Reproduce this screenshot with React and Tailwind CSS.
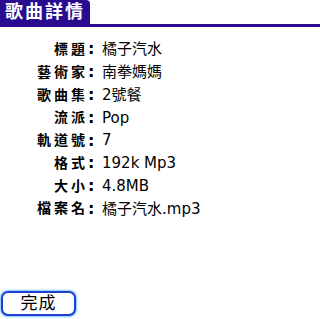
import React from 'react'

const rows = [
    ['標題', '橘子汽水'],
    ['藝術家', '南拳媽媽'],
    ['歌曲集', '2號餐'],
    ['流派', 'Pop'],
    ['軌道號', '7'],
    ['格式', '192k Mp3'],
    ['大小', '4.8MB'],
    ['檔案名', '橘子汽水.mp3'],
]

const font = { fontFamily: '"DejaVu Sans", "Noto Sans CJK TC", sans-serif' }

export default function App() {
    return (
        <div className="flex h-[319px] w-[320px] flex-col bg-white text-black" style={font}>
            <div className="flex flex-col">
                <div className="flex h-[24px] w-[90px] items-center rounded-tr-[4px] bg-[#2a0c91] pl-[5px] text-[18px] font-bold leading-none tracking-[2px] text-white">
                    歌曲詳情
                </div>
                <div className="h-[3px] w-full bg-[#2a0c91]" />
            </div>

            <div className="mt-[11px] flex flex-col">
                {rows.map(([label, value]) => (
                    <div key={label} className="flex h-[22.8px] items-center">
                        <span className="flex w-[97px] items-center justify-end">
                            <span className="text-[14px] font-bold tracking-[3px]">{label}</span>
                            <span className="w-[9px] text-[16px] font-black">:</span>
                        </span>
                        <span className="pl-[5px] text-[15px]">{value}</span>
                    </div>
                ))}
            </div>

            <div className="mt-auto pb-[3px] pl-[1px]">
                <button className="flex h-[25px] w-[75px] items-center justify-center rounded-[7px] border-2 border-[#1d3fd0] bg-white text-[17px] tracking-[1px] shadow-[0_0_2px_1px_#7fc4ff]">
                    完成
                </button>
            </div>
        </div>
    )
}
